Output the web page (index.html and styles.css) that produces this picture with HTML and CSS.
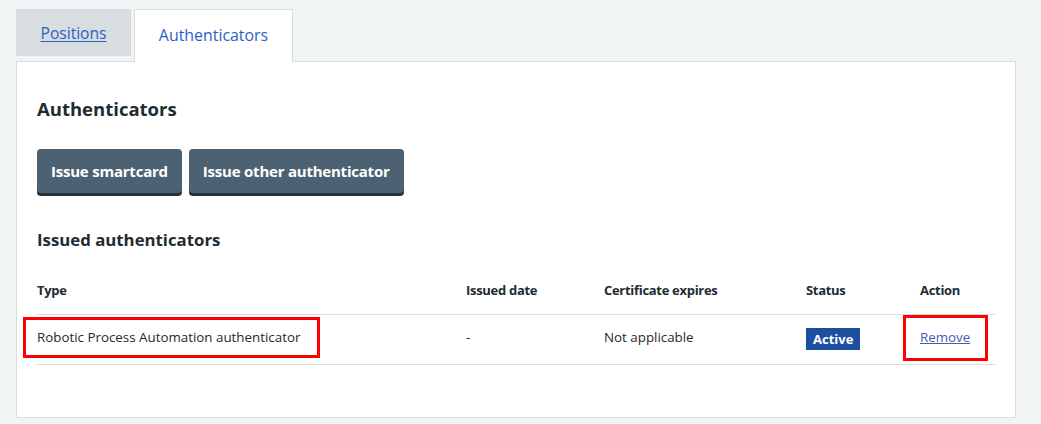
FILE: index.html
```html
<!DOCTYPE html>
<html lang="en">
<head>
<meta charset="utf-8">
<title>Authenticators</title>
<link rel="stylesheet" href="styles.css">
</head>
<body>
<div class="page">
  <ul class="tabs">
    <li class="tab"><a class="tab-link" href="#">Positions</a></li>
    <li class="tab tab-selected"><span class="tab-label">Authenticators</span></li>
  </ul>
  <section class="panel">
    <h2 class="heading-m">Authenticators</h2>
    <div class="button-row">
      <button class="btn">Issue smartcard</button>
      <button class="btn">Issue other authenticator</button>
    </div>
    <h3 class="heading-s">Issued authenticators</h3>
    <table class="table">
      <thead>
        <tr>
          <th class="col-type">Type</th>
          <th class="col-issued">Issued date</th>
          <th class="col-cert">Certificate expires</th>
          <th class="col-status">Status</th>
          <th class="col-action">Action</th>
        </tr>
      </thead>
      <tbody>
        <tr>
          <td><span class="highlight highlight-type">Robotic Process Automation authenticator</span></td>
          <td>-</td>
          <td>Not applicable</td>
          <td><span class="tag">Active</span></td>
          <td><a class="link-visited highlight highlight-action" href="#">Remove</a></td>
        </tr>
      </tbody>
    </table>
  </section>
</div>
</body>
</html>
```

FILE: styles.css
```css
html, body {
  margin: 0;
  padding: 0;
  background: #f0f4f5;
}

body {
  font-family: "Open Sans", "Noto Sans", sans-serif;
  color: #212b32;
}

.page {
  padding: 9px 0 0 16px;
  width: 1000px;
}

.tabs {
  list-style: none;
  margin: 0;
  padding: 0;
  display: flex;
  gap: 3px;
  align-items: flex-start;
}

.tab {
  height: 47px;
  width: 115px;
  background: #d8dde0;
  display: flex;
  align-items: center;
  justify-content: center;
  font-size: 15.6px;
}

.tab-link {
  color: #2c5fc4;
  text-decoration: underline;
  text-underline-offset: 2px;
  margin-top: 0;
}

.tab-selected {
  background: #fff;
  width: 157px;
  border: 1px solid #d8dde0;
  border-bottom: none;
  margin-bottom: -1px;
  position: relative;
  z-index: 1;
  box-sizing: content-box;
  height: 52px;
}

.tab-label {
  color: #2c5fc4;
  font-size: 15.9px;
  margin-top: -2px;
}

.panel {
  background: #fff;
  border: 1px solid #d8dde0;
  box-shadow: 0 3px 0 #d8dde0;
  padding: 20px 20px 52px 20px;
  box-sizing: border-box;
  width: 1000px;
}

.heading-m {
  font-size: 18.5px;
  font-weight: 700;
  margin: 13px 0 0 0;
  line-height: 28px;
}

.button-row {
  display: flex;
  gap: 7px;
  margin-top: 26px;
}

.btn {
  font-family: inherit;
  font-size: 15px;
  letter-spacing: -0.22px;
  font-weight: 700;
  color: #fff;
  background: #4c6272;
  border: none;
  border-radius: 4px;
  box-shadow: 0 3px 0 #263139;
  height: 44px;
  padding: 0 14px;
  cursor: pointer;
}

.heading-s {
  font-size: 16.8px;
  font-weight: 700;
  margin: 34px 0 0 0;
  line-height: 26px;
}

.table {
  width: 958px;
  border-collapse: collapse;
  margin-top: 27px;
  font-size: 13.35px;
}

.table th {
  text-align: left;
  font-weight: 700;
  font-size: 13px;
  letter-spacing: -0.3px;
  padding: 0 0 14px 0;
  line-height: 20px;
  border-bottom: 1px solid #d8dde0;
}

.table td {
  padding: 11px 0 14px 0;
  line-height: 22px;
  border-bottom: 1px solid #d8dde0;
  vertical-align: top;
}

.col-type { width: 429px; }
.col-issued { width: 138px; }
.col-cert { width: 202px; }
.col-status { width: 114px; }
.col-action { width: 75px; }

.tag {
  display: inline-block;
  background: #1d4f9f;
  color: #fff;
  font-weight: 700;
  font-size: 13px;
  padding: 0 7px;
  line-height: 22px;
  margin-top: 2px;
}

.link-visited {
  color: #4b5ab0;
  text-decoration: underline;
}

.highlight {
  position: relative;
  display: inline-block;
  line-height: 22px;
}

.highlight::after {
  content: "";
  position: absolute;
  border: 3px solid #ff0000;
  pointer-events: none;
}

.highlight-type::after {
  left: -14px;
  right: -20px;
  top: -9px;
  bottom: -10px;
}

.highlight-action::after {
  left: -17px;
  right: -18px;
  top: -11px;
  bottom: -13px;
}
```
